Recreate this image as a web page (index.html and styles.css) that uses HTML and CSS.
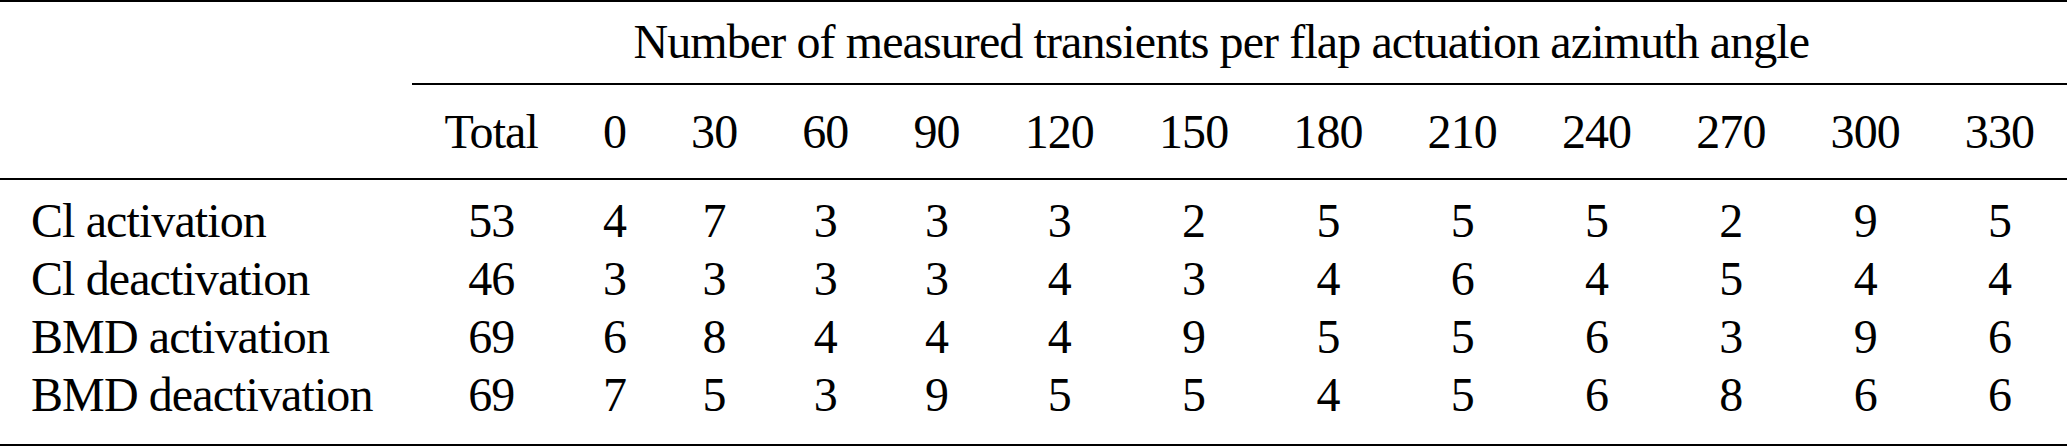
FILE: index.html
```html
<!DOCTYPE html>
<html lang="en">

<head>
    <meta charset="UTF-8">
    <title>Measured transients per flap actuation azimuth angle</title>
    <link rel="stylesheet" href="styles.css">
</head>

<body>

    <table class="counts">
        <thead>
            <tr class="group-row">
                <th class="stub"></th>
                <th class="group" colspan="13">Number of measured transients per flap actuation azimuth angle</th>
            </tr>
            <tr class="angle-row">
                <th class="stub"></th>
                <th>Total</th>
                <th>0</th>
                <th>30</th>
                <th>60</th>
                <th>90</th>
                <th>120</th>
                <th>150</th>
                <th>180</th>
                <th>210</th>
                <th>240</th>
                <th>270</th>
                <th>300</th>
                <th>330</th>
            </tr>
        </thead>
        <tbody>
            <tr>
                <td class="label">Cl activation</td>
                <td>53</td>
                <td>4</td>
                <td>7</td>
                <td>3</td>
                <td>3</td>
                <td>3</td>
                <td>2</td>
                <td>5</td>
                <td>5</td>
                <td>5</td>
                <td>2</td>
                <td>9</td>
                <td>5</td>
            </tr>
            <tr>
                <td class="label">Cl deactivation</td>
                <td>46</td>
                <td>3</td>
                <td>3</td>
                <td>3</td>
                <td>3</td>
                <td>4</td>
                <td>3</td>
                <td>4</td>
                <td>6</td>
                <td>4</td>
                <td>5</td>
                <td>4</td>
                <td>4</td>
            </tr>
            <tr>
                <td class="label">BMD activation</td>
                <td>69</td>
                <td>6</td>
                <td>8</td>
                <td>4</td>
                <td>4</td>
                <td>4</td>
                <td>9</td>
                <td>5</td>
                <td>5</td>
                <td>6</td>
                <td>3</td>
                <td>9</td>
                <td>6</td>
            </tr>
            <tr>
                <td class="label">BMD deactivation</td>
                <td>69</td>
                <td>7</td>
                <td>5</td>
                <td>3</td>
                <td>9</td>
                <td>5</td>
                <td>5</td>
                <td>4</td>
                <td>5</td>
                <td>6</td>
                <td>8</td>
                <td>6</td>
                <td>6</td>
            </tr>
        </tbody>
    </table>

</body>

</html>
```

FILE: styles.css
```css
body {
    margin: 0;
    background: #fff;
    color: #000;
    font-family: "Liberation Serif", "Times New Roman", serif;
}

.counts {
    border-collapse: separate;
    border-spacing: 0;
    font-size: 48px;
    line-height: 46px;
    letter-spacing: -0.9px;
}

.counts th,
.counts td {
    font-weight: normal;
    text-align: center;
    white-space: nowrap;
    padding: 6px 32.5px;
}

.counts .stub,
.counts .label {
    width: 381px;
    padding-left: 31px;
    padding-right: 0;
    text-align: left;
}

/* top rule */
.group-row th {
    border-top: 2px solid #000;
    padding-top: 17px;
    padding-bottom: 18px;
}

/* partial rule under the spanning heading */
.group-row .group {
    border-bottom: 2px solid #000;
    padding-left: 0;
    padding-right: 36px;
}

/* mid rule */
.angle-row th {
    padding-top: 24px;
    padding-bottom: 23px;
    border-bottom: 2px solid #000;
}

tbody tr:first-child td {
    padding-top: 18px;
}

/* bottom rule */
tbody tr:last-child td {
    padding-bottom: 26px;
    border-bottom: 2px solid #000;
}
```
